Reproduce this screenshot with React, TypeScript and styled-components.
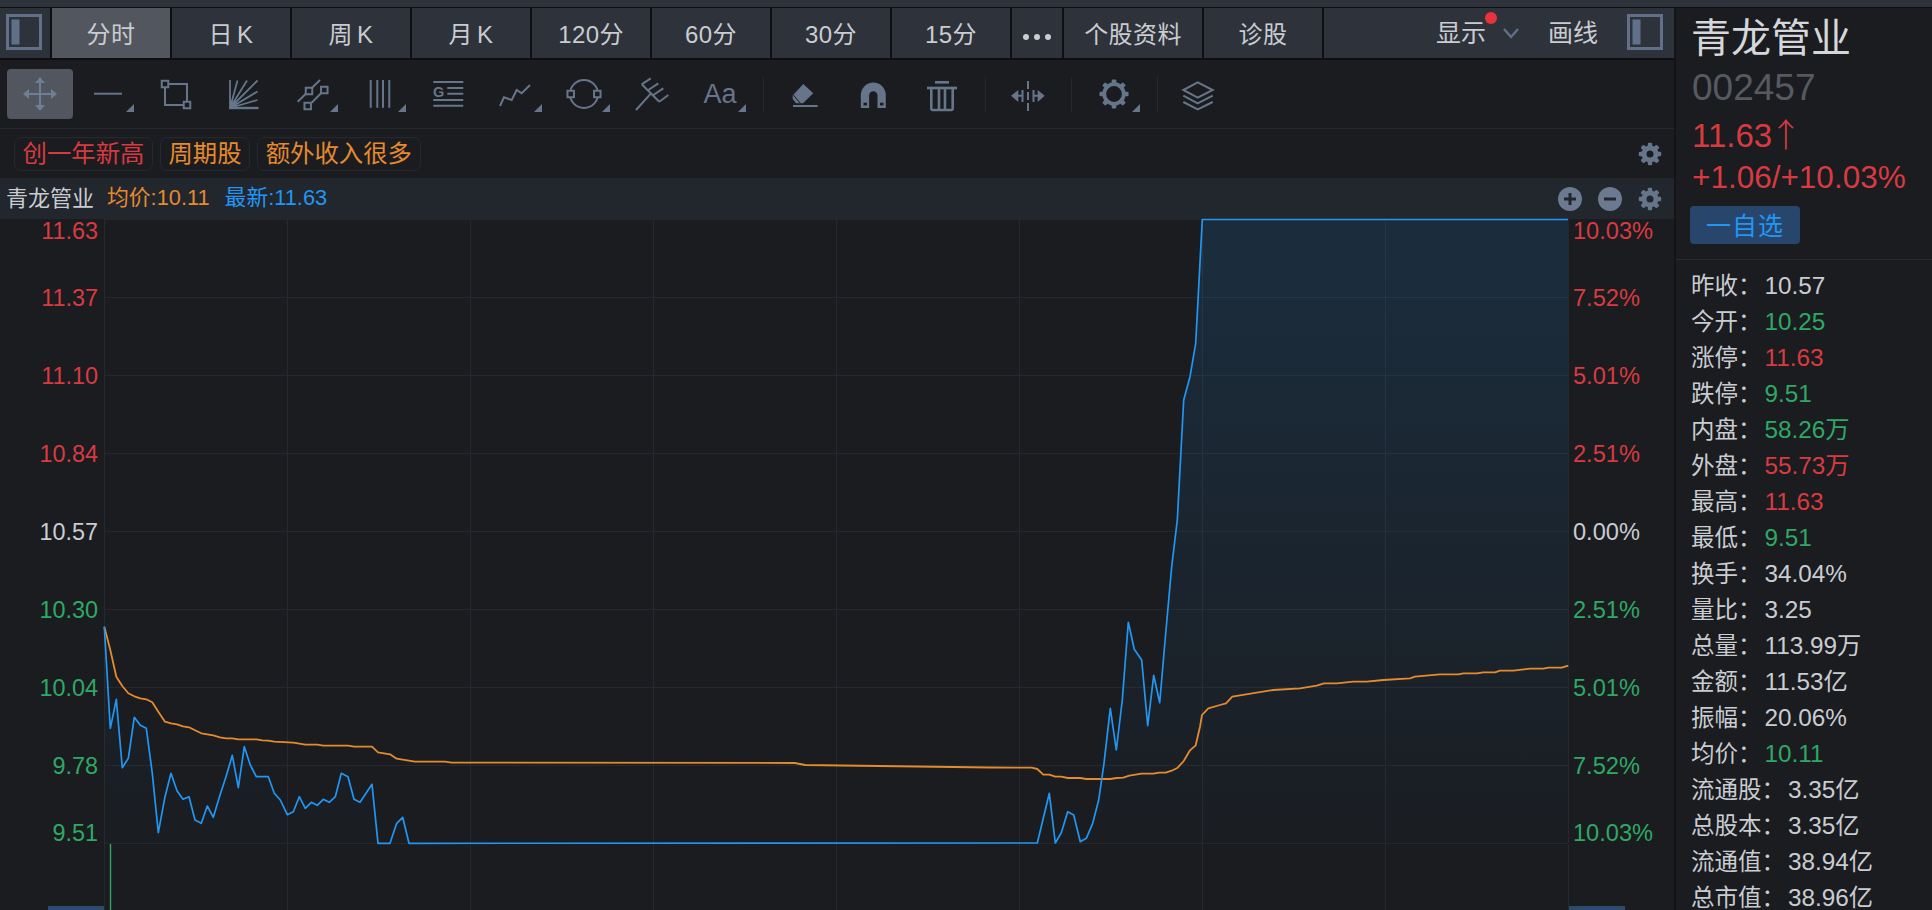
import React from "react";
import styled, { createGlobalStyle } from "styled-components";

const C = {
  bg: "#1a1c20", bar: "#2e333b", active: "#52575f", dark: "#0e0f12", head: "#22262d",
  line: "#25282e", text: "#c9ccd1", icon: "#66758a", red: "#d93a41", green: "#2fa866",
  orange: "#e68a2e", blue: "#2196f3",
};
type Tone = "text" | "red" | "green" | "orange" | "blue";
const toneColor = (t: Tone = "text") => C[t];

const Global = createGlobalStyle`
  html, body { margin: 0; padding: 0; height: 910px; overflow: hidden; background: ${C.bg}; }
  body { font-family: "Liberation Sans", "Noto Sans CJK SC", sans-serif; color: ${C.text}; }
  * { box-sizing: border-box; }
  #root { height: 910px; }
`;

const Page = styled.div`width: 1932px; height: 910px; display: flex; flex-direction: column; overflow: hidden; background: ${C.bg};`;
const TopStrip = styled.div`height: 8px; flex: none; background: ${C.bar}; border-bottom: 1px solid ${C.dark};`;
const Body = styled.div`flex: 1; display: flex; min-height: 0;`;
const Left = styled.div`width: 1674px; flex: none; display: flex; flex-direction: column;`;
const Divider = styled.div`width: 2px; flex: none; background: #131417;`;
const TabBar = styled.div`height: 52px; flex: none; display: flex; gap: 2px; background: ${C.dark}; padding-bottom: 2px;`;
const Tab = styled.div<{ $w: number; $on?: boolean }>`
  width: ${(p) => p.$w}px; flex: none; display: flex; align-items: center; justify-content: center;
  font-size: 24px; letter-spacing: 0.4px; word-spacing: -3px; padding-bottom: 2px; color: ${C.text};
  background: ${(p) => (p.$on ? C.active : C.bar)};
`;
const MoreTab = styled.div`width: 50px; flex: none; display: flex; align-items: center; justify-content: center; gap: 5px; padding-top: 8px; background: ${C.bar};`;
const MoreDot = styled.span`width: 6px; height: 6px; border-radius: 50%; background: ${C.text};`;
const PanelBtn = styled.div`width: 50px; flex: none; background: ${C.bar}; padding: 6px 0 0 6px;`;
const TabRest = styled.div`flex: 1; background: ${C.bar}; display: flex; align-items: flex-start; justify-content: flex-end; padding: 6px 11px 0 0;`;
const ShowLabel = styled.div`position: relative; font-size: 25px; line-height: 38px; margin-right: 17px;`;
const RedDot = styled.span`position: absolute; width: 12px; height: 12px; border-radius: 50%; background: #e8333c; right: -11px; top: -2px;`;
const DrawLabel = styled.div`font-size: 25px; line-height: 38px; margin: 0 29px 0 29px;`;

const ToolBar = styled.div`height: 69px; flex: none; display: flex; align-items: center; padding-left: 7px; gap: 2px; border-bottom: 1px solid ${C.line};`;
const ToolBtn = styled.div<{ $on?: boolean }>`
  width: 66px; height: 50px; flex: none; border-radius: 4px; background: ${(p) => (p.$on ? C.active : "transparent")};
  svg { display: block; }
`;
const ToolSep = styled.div<{ $l: number; $r: number; $h?: number }>`
  width: 1px; height: ${(p) => p.$h ?? 35}px; flex: none; background: ${C.line};
  margin: 0 ${(p) => p.$r}px 0 ${(p) => p.$l}px;
`;
const TagRow = styled.div`height: 49px; flex: none; display: flex; align-items: center; gap: 7px; padding: 0 12px 0 14px; position: relative;`;
const Tag = styled.div<{ $tone: Tone }>`
  height: 34px; line-height: 31px; padding: 0 7.5px; font-size: 24.4px; border: 1px solid ${C.line}; border-radius: 7px;
  color: ${(p) => toneColor(p.$tone)};
`;
const Spacer = styled.div`flex: 1;`;
const HeadRow = styled.div`height: 41px; flex: none; background: ${C.head}; display: flex; align-items: center; padding: 0 12px 0 6px; font-size: 21.8px;`;
const HeadName = styled.span`font-size: 22px; margin: 0 13px 6px 0;`;
const HeadVal = styled.span<{ $tone: Tone }>`color: ${(p) => toneColor(p.$tone)}; margin: 0 15px 6px 0;`;
const HeadIcons = styled.div`display: flex; gap: 16px; align-items: center;`;

const ChartGrid = styled.div`flex: 1; display: grid; grid-template-columns: 104px 1465px 1fr; grid-template-rows: 625px 1fr; min-height: 0;`;
const Axis = styled.div<{ $side: "l" | "r" }>`
  height: 624px; display: grid; grid-template-rows: 39px repeat(7, 78px) 39px;
  font-size: ${(p) => (p.$side === "l" ? 23.4 : 23.6)}px;
  text-align: ${(p) => (p.$side === "l" ? "right" : "left")};
  padding: ${(p) => (p.$side === "l" ? "0 6px 0 0" : "0 0 0 4px")};
`;
const AxisLabel = styled.div<{ $tone: Tone; $edge?: "top" | "bottom" }>`
  color: ${(p) => toneColor(p.$tone)}; line-height: 25px;
  align-self: ${(p) => (p.$edge === "top" ? "start" : p.$edge === "bottom" ? "end" : "center")};
  margin-top: ${(p) => (p.$edge ? "0" : "2px")};
  margin-bottom: ${(p) => (p.$edge === "bottom" ? "-3px" : "0")};
`;
const VolSide = styled.div<{ $end?: boolean }>`display: flex; align-items: flex-end; justify-content: ${(p) => (p.$end ? "flex-end" : "flex-start")};`;
const VolBox = styled.div`width: 56px; height: 4px; background: #2a4a6e;`;
const ChartSvg = styled.svg`display: block; overflow: visible;`;

const Right = styled.div`flex: 1; overflow: hidden; background: ${C.bg};`;
const Head = styled.div`padding: 0 0 15px 16px; border-bottom: 1px solid #292c32;`;
const Name = styled.div`height: 60px; line-height: 60px; font-size: 40px; margin-left: -1px; color: #d5d7da;`;
const Code = styled.div`height: 40px; line-height: 40px; font-size: 37px; color: #565a60;`;
const Price = styled.div`height: 51px; line-height: 51px; font-size: 33px; color: ${C.red};`;
const PriceArrow = styled.span`font-family: "Noto Sans CJK SC", sans-serif; margin-left: -3px; font-weight: 300;`;
const Change = styled.div`height: 37px; line-height: 37px; font-size: 31.5px; color: ${C.red};`;
const Fav = styled.div`
  width: 110px; height: 38px; margin: 10px 0 0 -2px; border-radius: 4px; background: #28456b; color: ${C.blue};
  display: flex; align-items: center; justify-content: center; font-size: 25px; letter-spacing: 1px; padding-bottom: 2px;
`;
const Stats = styled.div`padding: 8px 0 0 15px;`;
const Row = styled.div`height: 36px; display: flex; align-items: center; font-size: 23.5px; line-height: 24px; white-space: nowrap;`;
const RowLabel = styled.span`margin-right: 3px;`;
const RowValue = styled.span<{ $tone: Tone }>`color: ${(p) => toneColor(p.$tone)}; font-size: 24.3px;`;

/* ---------- icons ---------- */
const Box = ({ children }: { children: React.ReactNode }) => (
  <svg width="66" height="50" viewBox="0 0 66 50" fill="none" stroke={C.icon} strokeWidth="2">{children}</svg>
);
const Corner = () => <polygon points="59,35 59,43 51,43" fill={C.icon} stroke="none" />;
const H = ({ x, y, s = 6.5 }: { x: number; y: number; s?: number }) => (
  <rect x={x - s / 2} y={y - s / 2} width={s} height={s} fill={C.bg} />
);
const gearTeeth = [0, 45, 90, 135, 180, 225, 270, 315];
const GearShape = ({ cx, cy, r, w, t, c }: { cx: number; cy: number; r: number; w: number; t: number; c: string }) => (
  <g>
    <circle cx={cx} cy={cy} r={r} fill="none" stroke={c} strokeWidth={w} />
    {gearTeeth.map((a) => (
      <rect key={a} x={cx - t / 2} y={cy - r - w / 2 - t * 0.62} width={t} height={t} rx={t * 0.25} fill={c} stroke="none" transform={`rotate(${a} ${cx} ${cy})`} />
    ))}
  </g>
);
const SmallGear = () => (
  <svg width="24" height="24" viewBox="0 0 24 24"><GearShape cx={12} cy={12} r={6} w={5} t={4.4} c={C.icon} /></svg>
);
const Plus = ({ minus }: { minus?: boolean }) => (
  <svg width="24" height="24" viewBox="0 0 24 24">
    <circle cx="12" cy="12" r="12" fill="#6b7a90" />
    <path d={minus ? "M6 12h12" : "M6 12h12M12 6v12"} stroke={C.head} strokeWidth="3" />
  </svg>
);
const PanelIcon = () => (
  <svg width="36" height="36" viewBox="0 0 36 36">
    <rect x="1.5" y="1.5" width="33" height="33" fill="none" stroke="#5f7088" strokeWidth="3" />
    <rect x="5.5" y="5.5" width="8" height="25" fill="#5f7088" />
  </svg>
);
const Chevron = () => (
  <svg width="16" height="11" viewBox="0 0 16 11" fill="none" style={{ marginTop: 14 }}>
    <path d="M1 1l7 8 7-8" stroke="#5f7088" strokeWidth="2.4" />
  </svg>
);

const MoveI = () => (
  <Box>
    <path d="M33 10v30M18 25h30" stroke="#6d7e95" />
    <g fill="#6d7e95" stroke="none">
      <path d="M33 8l5 6h-10zM33 42l5-6h-10zM16 25l6-5v10zM50 25l-6-5v10z" />
    </g>
  </Box>
);
const LineI = () => <Box><path d="M19 24.7h28" /><Corner /></Box>;
const CropI = () => (
  <Box><rect x="22" y="15" width="22" height="21" /><H x={22} y={15} /><H x={44} y={36} /></Box>
);
const FanI = () => (
  <Box>
    <path d="M19 11v28M19 39L26.5 11.5M19 39L36 11.5M19 39L46.5 11.5M19 39L46.5 22.5M19 39L46.5 31" strokeWidth="1.8" />
    <path d="M18 39h29.5" strokeWidth="2.4" />
  </Box>
);
const ChannelI = () => (
  <Box>
    <path d="M18.7 32.7L41 11M32.7 33.7L42 24.3" />
    <H x={30} y={22} /><H x={45.3} y={21} /><H x={28.7} y={37} />
    <Corner />
  </Box>
);
const VLinesI = () => <Box><path d="M23.7 11v27.7M30.3 11v27.7M36 11v27.7M42.3 11v27.7" /><Corner /></Box>;
const GListI = () => (
  <Box>
    <path d="M18.3 13h30M18.3 31h30M18.3 36.7h30M32.3 19h16M32.3 24.7h16" />
    <text x="18" y="27.5" fontSize="14.5" fontWeight="700" fill={C.icon} stroke="none" fontFamily="Liberation Sans">G</text>
  </Box>
);
const ZigI = () => <Box><path d="M17 37l4-8.7 7.7 2.7 5-10 5 3.3 8.3-8.3" /><Corner /></Box>;
const CircleI = () => (
  <Box><circle cx="33" cy="25" r="14" /><H x={19.7} y={25} /><H x={46.3} y={25} /><Corner /></Box>
);
const ForkI = () => (
  <Box>
    <path d="M17 41L32.7 23.7M22.7 15.3L40.3 32.7M22.7 15.3l9-6M29.3 21l10-6.7M34.3 26l10-6.7M40.3 32.7l9-6.7" />
  </Box>
);
const AaI = () => (
  <Box>
    <text x="16.5" y="34" fontSize="27" fill={C.icon} stroke="none" fontFamily="Liberation Sans">Aa</text>
    <Corner />
  </Box>
);
const EraserI = () => (
  <Box>
    <path d="M21 37h24.7" />
    <polygon points="31.3,15 41.3,24.3 31,34.3 24,34.3 20.7,30 20.7,26.5" fill={C.icon} stroke="none" />
    <path d="M21 25.5l7.5 9" stroke={C.bg} strokeWidth="1" />
  </Box>
);
const MagnetI = () => (
  <Box>
    <path d="M20.8 39V26a12.5 12.5 0 0 1 25 0V39H37.5V26.5a4.2 4.2 0 0 0-8.4 0V39Z" fill={C.icon} stroke="none" />
    <rect x="23.5" y="33.7" width="3.5" height="2.7" fill={C.bg} stroke="none" />
    <rect x="40" y="33.7" width="3.5" height="2.7" fill={C.bg} stroke="none" />
  </Box>
);
const TrashI = () => (
  <Box>
    <path d="M27 13.3h14" strokeWidth="2.7" />
    <path d="M19 19h30" strokeWidth="2.7" />
    <path d="M23.3 19v20.5q0 1.5 1.5 1.5h18.4q1.5 0 1.5-1.5V19M31 20v20M37 20v20" strokeWidth="2.6" />
  </Box>
);
const SplitI = () => (
  <Box>
    <path d="M33 12v30" strokeDasharray="8 3" />
    <g fill={C.icon} stroke="none">
      <polygon points="16,26.7 23.3,21 23.3,33" />
      <polygon points="49.7,26.7 42.7,21 42.7,33" />
    </g>
    <path d="M27.5 21v12M23 26.7h4.5M38.5 21v12M38.5 26.7h4.5" />
  </Box>
);
const GearI = () => (
  <Box>
    <GearShape cx={33} cy={25} r={9.8} w={3.8} t={4.6} c={C.icon} />
    <Corner />
  </Box>
);
const LayersI = () => (
  <Box>
    <polygon points="32.7,13.3 47.7,21 32.7,28.7 18.3,21" />
    <path d="M18.3 26.7l14.4 7.6 15-7.6M18.3 33l14.4 7.5 15-7.5" />
  </Box>
);

/* ---------- chart data (page coordinates) ---------- */
type P = [number, number];
const conv = (ox: number, oy: number, s: number, pts: P[]): P[] => pts.map(([x, y]) => [ox + x / s, oy + y / s]);
const blue: P[] = [
  ...conv(0, 600, 3, [[313,80],[331,385],[349,298],[367,503],[385,475],[403,352],[421,376],[439,385],[457,520],[475,698],[495,590],[513,520],[531,572],[549,598],[567,590],[585,660],[604,670],[622,618],[640,652],[660,585],[678,530],[697,466],[715,563],[733,440],[751,495],[769,530],[787,530],[805,530],[823,580],[841,600],[862,644],[880,635],[898,590],[916,625],[934,607],[952,616],[970,598],[988,607],[1006,590],[1024,520],[1044,530],[1062,598],[1080,607],[1098,580],[1116,553],[1134,730],[1170,730],[1190,670],[1208,652],[1227,730]]),
  ...conv(1000, 560, 3, [[112,849],[148,700],[166,849],[184,818],[203,755],[221,765],[241,845],[259,835],[278,790],[296,720],[312,610],[331,445],[349,570],[367,420],[385,187],[403,268],[425,300],[443,497],[461,346],[479,428],[497,220],[515,20]]),
  [1177.3, 520], [1183.7, 400], [1190, 376.7], [1195.7, 343.3], [1202.3, 219.5], [1568, 219.5],
];
const orange: P[] = [
  ...conv(0, 600, 3, [[313,80],[331,150],[349,230],[367,258],[385,280],[403,289],[421,295],[439,298],[457,307],[475,335],[495,365],[513,370],[531,373],[549,379],[567,382],[585,391],[604,400],[622,403],[640,406],[660,412],[678,415],[697,415],[715,418],[770,418],[787,421],[805,422],[823,425],[880,428],[916,434],[952,434],[970,437],[1044,437],[1062,440],[1116,440],[1134,457],[1170,463],[1190,476],[1208,479],[1245,485],[1335,485],[1355,488],[1500,488]]),
  [795, 763], [805, 765], [990, 767.5],
  ...conv(1000, 560, 3, [[95,623],[112,627],[130,644],[148,644],[166,650],[184,650],[203,654],[241,654],[259,657],[331,657],[350,654],[370,653],[388,647],[425,641],[460,641],[478,638],[497,638],[515,632],[533,623],[551,603],[569,572],[587,556],[600,500]]),
  ...conv(1200, 640, 3, [[6,225],[25,205],[60,195],[78,190],[97,170],[220,150],[300,145],[350,137],[372,130],[410,130],[460,125],[500,125],[550,120],[630,115],[645,110],[720,103],[775,103],[790,100],[830,100],[850,97],[885,97],[900,92],[940,92],[990,86],[1030,86],[1045,83],[1085,83],[1105,77]]),
];
const toPath = (pts: P[]) => pts.map(([x, y], i) => `${i ? "L" : "M"}${(x - 104).toFixed(1)} ${(y - 219).toFixed(1)}`).join("");
const vGrid = Array.from({ length: 9 }, (_, i) => i * 183 + 0.5);
const hGrid = Array.from({ length: 9 }, (_, i) => i * 78 + 0.5);

const leftAxis: [string, Tone][] = [["11.63","red"],["11.37","red"],["11.10","red"],["10.84","red"],["10.57","text"],["10.30","green"],["10.04","green"],["9.78","green"],["9.51","green"]];
const rightAxis: [string, Tone][] = [["10.03%","red"],["7.52%","red"],["5.01%","red"],["2.51%","red"],["0.00%","text"],["2.51%","green"],["5.01%","green"],["7.52%","green"],["10.03%","green"]];
const edge = (i: number) => (i === 0 ? "top" : i === 8 ? "bottom" : undefined);

const stats: [string, string, Tone][] = [
  ["昨收：","10.57","text"],["今开：","10.25","green"],["涨停：","11.63","red"],["跌停：","9.51","green"],
  ["内盘：","58.26万","green"],["外盘：","55.73万","red"],["最高：","11.63","red"],["最低：","9.51","green"],
  ["换手：","34.04%","text"],["量比：","3.25","text"],["总量：","113.99万","text"],["金额：","11.53亿","text"],
  ["振幅：","20.06%","text"],["均价：","10.11","green"],["流通股：","3.35亿","text"],["总股本：","3.35亿","text"],
  ["流通值：","38.94亿","text"],["总市值：","38.96亿","text"],
];
const tabsA: string[] = ["分时","日 K","周 K","月 K","120分","60分","30分","15分"];

export default function App() {
  return (
    <Page>
      <Global />
      <TopStrip />
      <Body>
        <Left>
          <TabBar>
            <PanelBtn><PanelIcon /></PanelBtn>
            {tabsA.map((t, i) => <Tab key={t} $w={118} $on={i === 0}>{t}</Tab>)}
            <MoreTab><MoreDot /><MoreDot /><MoreDot /></MoreTab>
            <Tab $w={138}>个股资料</Tab>
            <Tab $w={118}>诊股</Tab>
            <TabRest>
              <ShowLabel>显示<RedDot /></ShowLabel>
              <Chevron />
              <DrawLabel>画线</DrawLabel>
              <PanelIcon />
            </TabRest>
          </TabBar>
          <ToolBar>
            <ToolBtn $on><MoveI /></ToolBtn>
            <ToolBtn><LineI /></ToolBtn>
            <ToolBtn><CropI /></ToolBtn>
            <ToolBtn><FanI /></ToolBtn>
            <ToolBtn><ChannelI /></ToolBtn>
            <ToolBtn><VLinesI /></ToolBtn>
            <ToolBtn><GListI /></ToolBtn>
            <ToolBtn><ZigI /></ToolBtn>
            <ToolBtn><CircleI /></ToolBtn>
            <ToolBtn><ForkI /></ToolBtn>
            <ToolBtn><AaI /></ToolBtn>
            <ToolSep $l={8} $r={6} />
            <ToolBtn><EraserI /></ToolBtn>
            <ToolBtn><MagnetI /></ToolBtn>
            <ToolBtn><TrashI /></ToolBtn>
            <ToolSep $l={9} $r={7} />
            <ToolBtn><SplitI /></ToolBtn>
            <ToolSep $l={8} $r={7} />
            <ToolBtn><GearI /></ToolBtn>
            <ToolSep $l={8} $r={5} $h={37} />
            <ToolBtn><LayersI /></ToolBtn>
          </ToolBar>
          <TagRow>
            <Tag $tone="red">创一年新高</Tag>
            <Tag $tone="orange">周期股</Tag>
            <Tag $tone="orange">额外收入很多</Tag>
            <Spacer />
            <SmallGear />
          </TagRow>
          <HeadRow>
            <HeadName>青龙管业</HeadName>
            <HeadVal $tone="orange">均价:10.11</HeadVal>
            <HeadVal $tone="blue">最新:11.63</HeadVal>
            <Spacer />
            <HeadIcons><Plus /><Plus minus /><SmallGear /></HeadIcons>
          </HeadRow>
          <ChartGrid>
            <Axis $side="l">
              {leftAxis.map(([t, c], i) => <AxisLabel key={t} $tone={c} $edge={edge(i)}>{t}</AxisLabel>)}
            </Axis>
            <ChartSvg width="1465" height="625" viewBox="0 0 1465 625" fill="none">
              <defs>
                <linearGradient id="area" gradientUnits="userSpaceOnUse" x1="0" y1="0" x2="0" y2="624">
                  <stop offset="0" stopColor={C.blue} stopOpacity="0.14" />
                  <stop offset="1" stopColor={C.blue} stopOpacity="0.01" />
                </linearGradient>
              </defs>
              {hGrid.map((y) => <path key={y} d={`M0 ${y}H1464`} stroke={C.line} />)}
              {vGrid.map((x) => <path key={x} d={`M${x} 0V624`} stroke={C.line} />)}
              <path d={`${toPath(blue)}L1464 624L0 624Z`} fill="url(#area)" />
              <path d={toPath(orange)} stroke={C.orange} strokeWidth="1.8" strokeLinejoin="round" />
              <path d={toPath(blue)} stroke={C.blue} strokeWidth="1.7" strokeLinejoin="round" />
            </ChartSvg>
            <Axis $side="r">
              {rightAxis.map(([t, c], i) => <AxisLabel key={t + c + i} $tone={c} $edge={edge(i)}>{t}</AxisLabel>)}
            </Axis>
            <VolSide $end><VolBox /></VolSide>
            <ChartSvg width="1465" height="66" viewBox="0 0 1465 66" fill="none">
              {vGrid.map((x) => <path key={x} d={`M${x} 0V66`} stroke={C.line} />)}
              <path d="M6.5 0V66" stroke={C.green} strokeWidth="1.4" />
            </ChartSvg>
            <VolSide><VolBox /></VolSide>
          </ChartGrid>
        </Left>
        <Divider />
        <Right>
          <Head>
            <Name>青龙管业</Name>
            <Code>002457</Code>
            <Price>11.63<PriceArrow>↑</PriceArrow></Price>
            <Change>+1.06/+10.03%</Change>
            <Fav>一自选</Fav>
          </Head>
          <Stats>
            {stats.map(([l, v, c]) => (
              <Row key={l}><RowLabel>{l}</RowLabel><RowValue $tone={c}>{v}</RowValue></Row>
            ))}
          </Stats>
        </Right>
      </Body>
    </Page>
  );
}
